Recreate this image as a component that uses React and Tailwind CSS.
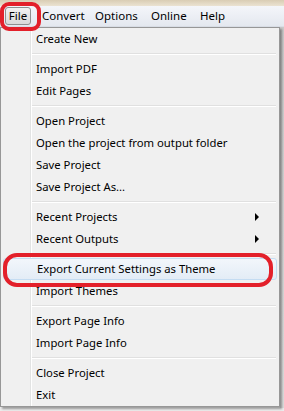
const font = { fontFamily: '"Noto Sans", "Open Sans", sans-serif' };

const Item = ({ label, arrow }) => (
  <div className="h-[22px] flex items-center pl-[35px] pr-3 relative">
    <span className="text-[11.3px] text-black leading-none">{label}</span>
    {arrow && (
      <span className="ml-auto mr-[8px] w-0 h-0 border-y-[4px] border-y-transparent border-l-[4px] border-l-black" />
    )}
  </div>
);

const Sep = () => (
  <div className="h-[8px] pl-[31px] pr-[3px] pt-[3px]">
    <div className="h-px bg-[#e0e0e0]" />
    <div className="h-px bg-white" />
  </div>
);

export default function App() {
  return (
    <div
      className="w-[284px] h-[411px] relative overflow-hidden bg-[#f0f0f0] flex flex-col"
      style={font}
    >
      {/* window title strip */}
      <div className="h-[6px] bg-gradient-to-b from-[#d9cdb4] to-[#ebe3d2] shrink-0" />

      {/* menu bar */}
      <div className="h-[21px] shrink-0 flex items-center bg-gradient-to-b from-[#f4f6fa] to-[#e4e8ef] border-b border-[#d8dde5] text-[11.5px] text-black">
        <div className="ml-[5px] w-[26px] h-[18px] flex items-center justify-center border border-[#8e8f8f] rounded-[3px] bg-gradient-to-b from-[#f2f2f2] to-[#d9d9d9]">
          File
        </div>
        <div className="ml-[11px] w-[53px]">Convert</div>
        <div className="w-[56px]">Options</div>
        <div className="w-[49px]">Online</div>
        <div>Help</div>
      </div>

      <div className="flex flex-1 min-h-0">
        {/* dropdown menu */}
        <div className="w-[280px] h-[380px] shrink-0 bg-[#f0f0f0] border border-[#979797] shadow-[2px_2px_2px_rgba(0,0,0,0.35)] relative">
          <div className="absolute left-[29px] top-0 bottom-0 w-px bg-[#e2e3e3]" />
          <div className="absolute left-[30px] top-0 bottom-0 w-px bg-white" />
          <div className="relative">
            <Item label="Create New" />
            <Sep />
            <Item label="Import PDF" />
            <Item label="Edit Pages" />
            <Sep />
            <Item label="Open Project" />
            <Item label="Open the project from output folder" />
            <Item label="Save Project" />
            <Item label="Save Project As..." />
            <Sep />
            <Item label="Recent Projects" arrow />
            <Item label="Recent Outputs" arrow />
            <Sep />
            <div className="mx-[2px] rounded-[3px] border border-[#c4dcf2] bg-gradient-to-b from-[#f2f6fb] to-[#e3ecf6]">
              <div className="h-[20px] flex items-center pl-[33px]">
                <span className="text-[11.3px] text-black leading-none">Export Current Settings as Theme</span>
              </div>
            </div>
            <Item label="Import Themes" />
            <Sep />
            <Item label="Export Page Info" />
            <Item label="Import Page Info" />
            <Sep />
            <Item label="Close Project" />
            <Item label="Exit" />
          </div>
        </div>
        {/* app content peeking on the right */}
        <div className="flex-1 bg-gradient-to-b from-[#c9c9c9] to-[#dcdcdc]" />
      </div>
      <div className="h-[3px] shrink-0 bg-[#ececec]" />

      {/* red annotations */}
      <div className="absolute left-0 top-[2px] w-[41px] h-[29px] border-[4px] border-[#e3202a] rounded-[9px]" />
      <div className="absolute left-[3px] top-[253px] w-[270px] h-[34px] border-[4px] border-[#e3202a] rounded-[14px]" />
    </div>
  );
}
